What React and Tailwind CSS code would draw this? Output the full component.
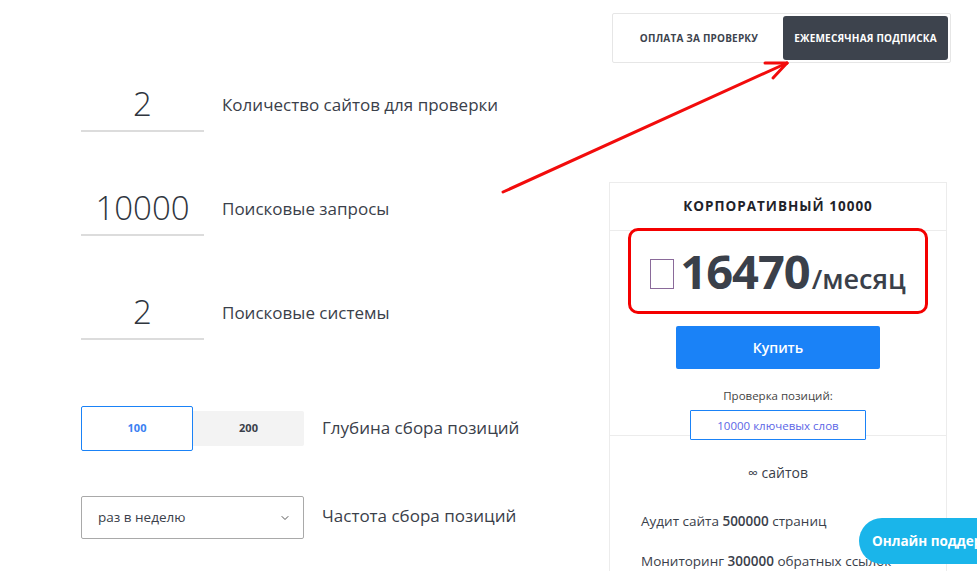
import React from 'react';
import { ChevronDown } from 'lucide-react';

const font = { fontFamily: '"Open Sans", "Liberation Sans", sans-serif' };

const NumberRow = ({ value, label }) => (
  <div className="flex items-center">
    <div className="w-[123px] h-[52px] border-b-2 border-[#dcdcdc] flex items-center justify-center text-[33px] font-light text-[#2f353e] pb-[2px]">
      {value}
    </div>
    <span className="ml-[18px] text-[17px] text-[#3a404a] -mt-[2px]">{label}</span>
  </div>
);

export default function App() {
  return (
    <div className="relative w-[977px] h-[588px] overflow-hidden bg-white" style={font}>
      <div className="flex">
        {/* LEFT: calculator */}
        <div className="ml-[81px] w-[528px] pt-[80px] flex flex-col">
          <div className="flex flex-col gap-[52px]">
            <NumberRow value="2" label="Количество сайтов для проверки" />
            <NumberRow value="10000" label="Поисковые запросы" />
            <NumberRow value="2" label="Поисковые системы" />
          </div>

          {/* depth toggle */}
          <div className="mt-[66px] flex items-center">
            <div className="flex items-center">
              <button className="w-[112px] h-[45px] border border-[#1a82f7] rounded-[2px] text-[11px] font-bold text-[#3b7ff2] bg-white">
                100
              </button>
              <button className="w-[111px] h-[35px] bg-[#f3f3f3] rounded-r-[2px] text-[11px] font-bold text-[#3a404a]">
                200
              </button>
            </div>
            <span className="ml-[18px] text-[17px] text-[#3a404a] -mt-[2px]">Глубина сбора позиций</span>
          </div>

          {/* frequency select */}
          <div className="mt-[45px] flex items-center">
            <div className="w-[223px] h-[43px] border border-[#a9a9a9] rounded-[2px] flex items-center justify-between pl-[16px] pr-[12px]">
              <span className="text-[13.5px] text-[#3a404a]">раз в неделю</span>
              <ChevronDown className="w-[12px] h-[12px] text-[#555]" strokeWidth={2} />
            </div>
            <span className="ml-[18px] text-[17px] text-[#3a404a] -mt-[4px]">Частота сбора позиций</span>
          </div>
        </div>

        {/* RIGHT: tabs + plan card */}
        <div className="w-[338px] flex flex-col">
          <div className="ml-[3px] mt-[13px] w-[339px] h-[50px] border border-[#e6e6e6] rounded-[2px] flex items-center p-[2px]">
            <div className="flex-1 text-center text-[10px] font-bold text-[#3d434d] tracking-[0.2px]">
              ОПЛАТА ЗА ПРОВЕРКУ
            </div>
            <div className="w-[165px] h-[44px] bg-[#3d434d] rounded-[3px] flex items-center justify-center text-[10px] font-bold text-white tracking-[0.2px]">
              ЕЖЕМЕСЯЧНАЯ ПОДПИСКА
            </div>
          </div>

          <div className="mt-[119px] w-[338px] border border-[#ececec] border-b-0 flex flex-col">
            <div className="h-[48px] border-b border-[#ececec] flex items-center justify-center text-[13.5px] font-bold tracking-[1px] text-[#1f232a]">
              КОРПОРАТИВНЫЙ 10000
            </div>

            <div className="mx-[18px] -mt-[3px] h-[86px] border-[3px] border-[#f40000] rounded-[10px] flex items-center justify-center">
              <div className="flex items-end">
                <span className="w-[24px] h-[30px] border border-[#8a6a9a] mb-[6px] mr-[6px]" />
                <span className="text-[47px] font-bold leading-none text-[#3a404a] tracking-[-1px]">16470</span>
                <span className="text-[27px] font-semibold leading-none text-[#3a404a] mb-[3px] ml-[2px]">/месяц</span>
              </div>
            </div>

            <div className="flex flex-col items-center border-b border-[#ececec]">
              <button className="mt-[12px] w-[204px] h-[43px] bg-[#1a82f7] rounded-[2px] text-white text-[14px] font-semibold">
                Купить
              </button>
              <span className="mt-[18px] text-[11.5px] text-[#444]">Проверка позиций:</span>
              <div className="mt-[6px] -mb-[5px] relative z-10 bg-white w-[176px] h-[30px] border border-[#1a82f7] rounded-[1px] flex items-center justify-center text-[11.5px] text-[#5b66e6]">
                10000 ключевых слов
              </div>
            </div>

            <div className="flex flex-col pt-[26px]">
              <div className="text-center text-[14px] text-[#3a404a]">∞ сайтов</div>
              <div className="mt-[28px] pl-[31px] flex flex-col gap-[19px] text-[13.5px] text-[#3a404a]">
                <span>Аудит сайта <span className="font-semibold">500000</span> страниц</span>
                <span>Мониторинг <span className="font-semibold">300000</span> обратных ссылок</span>
              </div>
            </div>
          </div>
        </div>
      </div>

      {/* red annotation arrow */}
      <svg className="absolute left-0 top-0 pointer-events-none" width="977" height="588">
        <g stroke="#f20c0c" strokeWidth="3" strokeLinecap="round" fill="none">
          <line x1="503" y1="192" x2="787" y2="63" />
          <line x1="765" y1="63" x2="787" y2="63" />
          <line x1="773" y1="78" x2="787" y2="63" />
        </g>
      </svg>

      {/* chat widget */}
      <div className="absolute left-[859px] top-[518px] w-[150px] h-[46px] bg-[#1ab5ea] rounded-l-[23px] flex items-center pl-[13px] text-white text-[13.5px] font-bold whitespace-nowrap">
        Онлайн поддержка
      </div>
    </div>
  );
}
